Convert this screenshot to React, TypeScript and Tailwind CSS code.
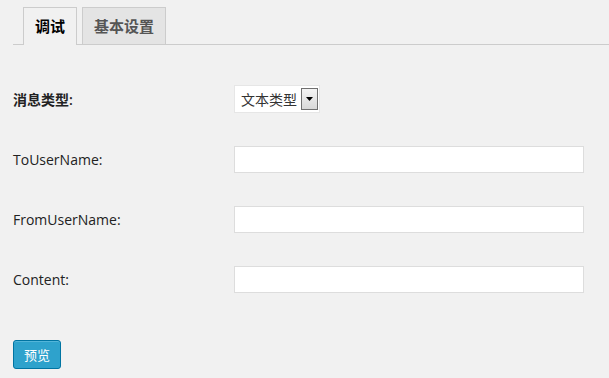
export default function App() {
  const rows = ["ToUserName:", "FromUserName:", "Content:"];
  return (
    <div className="w-[609px] h-[378px] bg-[#f1f1f1] overflow-hidden font-['Open_Sans','Noto_Sans_CJK_SC',sans-serif] text-[#222]">
      <nav className="ml-[13px] pt-[7px] pl-[10px] flex gap-[5px] border-b border-[#ccc]">
        <div className="h-[38px] -mb-px w-[54px] flex items-center justify-center border border-b-0 border-[#ccc] bg-[#f1f1f1] text-[15px] font-bold text-black font-['Noto_Sans_CJK_SC',sans-serif]">
          调试
        </div>
        <div className="h-[37px] w-[84px] flex items-center justify-center border border-b-0 border-[#ccc] bg-[#e4e4e4] text-[15px] font-bold text-[#555] font-['Noto_Sans_CJK_SC',sans-serif]">
          基本设置
        </div>
      </nav>

      <div className="pl-[13px] pt-[40px]">
        <div className="flex items-center h-[28px]">
          <div className="w-[221px] text-[14px] font-semibold">消息类型:</div>
          <div className="h-[28px] w-[86px] bg-white border border-[#e6e6e6] flex items-center pl-[6px] gap-[4px]">
            <span className="text-[14px] text-[#333] font-['Noto_Sans_CJK_SC',sans-serif]">文本类型</span>
            <span className="h-[22px] w-[17px] border border-[#707070] bg-gradient-to-b from-[#f4f4f4] to-[#d8d8d8] flex items-center justify-center">
              <svg width="7" height="4" viewBox="0 0 7 4">
                <path d="M0 0h7L3.5 4z" fill="#000" />
              </svg>
            </span>
          </div>
        </div>

        {rows.map((label) => (
          <div key={label} className="flex items-center h-[27px] mt-[33px]">
            <div className="w-[221px] text-[14px]">{label}</div>
            <input className="h-[27px] w-[350px] bg-white border border-[#ddd] outline-none" />
          </div>
        ))}

        <button className="mt-[47px] h-[29px] w-[48px] rounded-[3px] bg-[#2ea2cc] border border-[#0074a2] text-white text-[13px] font-['Noto_Sans_CJK_SC',sans-serif] shadow-[inset_0_1px_0_rgba(120,200,230,0.5)]">
          预览
        </button>
      </div>
    </div>
  );
}
